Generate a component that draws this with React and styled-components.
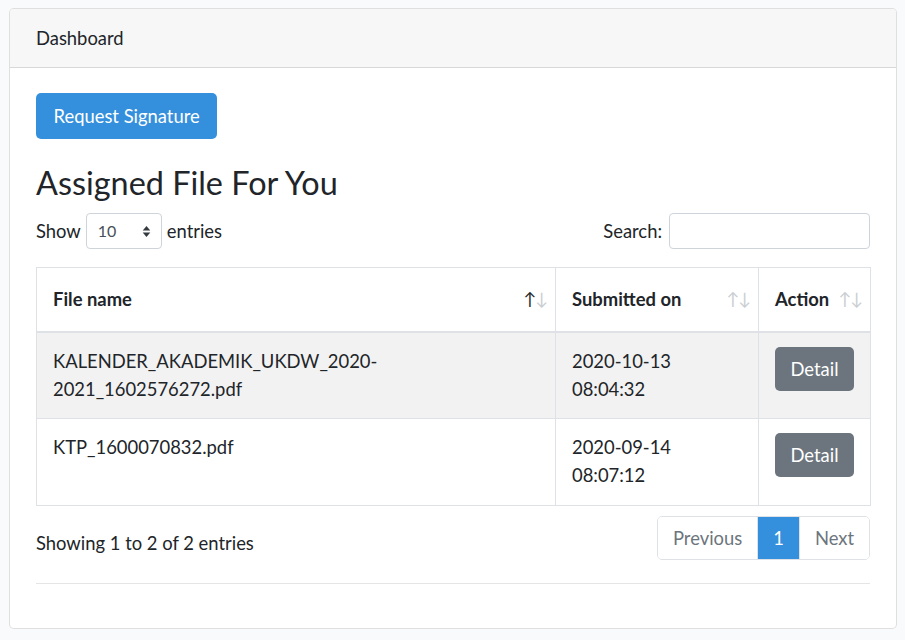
import styled, { createGlobalStyle } from "styled-components";

const GlobalStyle = createGlobalStyle`
  body {
    margin: 0;
    background: #f8fafc;
    font-family: "Lato", "Noto Sans", sans-serif;
    font-size: 18.4px;
    line-height: 28px;
    color: #212529;
  }
`;

const rows = [
  {
    name: "KALENDER_AKADEMIK_UKDW_2020-2021_1602576272.pdf",
    date: "2020-10-13",
    time: "08:04:32",
  },
  { name: "KTP_1600070832.pdf", date: "2020-09-14", time: "08:07:12" },
];

const App = () => {
  return (
    <>
      <GlobalStyle />
      <Page>
        <Card>
          <CardHeader>Dashboard</CardHeader>
          <CardBody>
            <PrimaryButton>Request Signature</PrimaryButton>
            <Title>Assigned File For You</Title>
            <Controls>
              <Label>
                Show
                <SelectBox>
                  <span>10</span>
                  <SelectArrows viewBox="0 0 8 12">
                    <path d="M4 1 L7.5 5 H0.5 Z" fill="#343a40" />
                    <path d="M4 11 L7.5 7 H0.5 Z" fill="#343a40" />
                  </SelectArrows>
                </SelectBox>
                entries
              </Label>
              <Label>
                Search:
                <SearchInput />
              </Label>
            </Controls>
            <Table>
              <colgroup>
                <col style={{ width: 519 }} />
                <col style={{ width: 203 }} />
                <col style={{ width: 112 }} />
              </colgroup>
              <thead>
                <tr>
                  <Th>
                    File name
                    <SortIcons>
                      <Arrow $active>↑</Arrow>
                      <Arrow>↓</Arrow>
                    </SortIcons>
                  </Th>
                  <Th>
                    Submitted on
                    <SortIcons>
                      <Arrow>↑</Arrow>
                      <Arrow>↓</Arrow>
                    </SortIcons>
                  </Th>
                  <Th>
                    Action
                    <SortIcons>
                      <Arrow>↑</Arrow>
                      <Arrow>↓</Arrow>
                    </SortIcons>
                  </Th>
                </tr>
              </thead>
              <tbody>
                {rows.map((row, i) => (
                  <Row key={row.name} $striped={i % 2 === 0}>
                    <Td>{row.name}</Td>
                    <Td>
                      {row.date}
                      <br />
                      {row.time}
                    </Td>
                    <Td>
                      <DetailButton>Detail</DetailButton>
                    </Td>
                  </Row>
                ))}
              </tbody>
            </Table>
            <Footer>
              <span>Showing 1 to 2 of 2 entries</span>
              <Pagination>
                <PageItem $disabled>Previous</PageItem>
                <PageItem $active>1</PageItem>
                <PageItem $disabled>Next</PageItem>
              </Pagination>
            </Footer>
            <Divider />
          </CardBody>
        </Card>
      </Page>
    </>
  );
};

const Page = styled.div`
  padding: 8px 8px 10px 9px;
`;

const Card = styled.div`
  background: #fff;
  border: 1px solid rgba(0, 0, 0, 0.125);
  border-radius: 5px;
  overflow: hidden;
`;

const CardHeader = styled.div`
  height: 58px;
  display: flex;
  align-items: center;
  padding: 0 26px;
  background: #f7f7f7;
  border-bottom: 1px solid rgba(0, 0, 0, 0.125);
`;

const CardBody = styled.div`
  padding: 25px 26px 44px;
`;

const PrimaryButton = styled.button`
  height: 46px;
  padding: 0 17.5px;
  border: none;
  border-radius: 5px;
  background: #3490dc;
  color: #fff;
  font-family: inherit;
  font-size: 18.4px;
`;

const Title = styled.h3`
  margin: 26px 0 12px;
  font-size: 32.4px;
  font-weight: 400;
  line-height: 36px;
`;

const Controls = styled.div`
  display: flex;
  justify-content: space-between;
  align-items: center;
  height: 36px;
  margin-bottom: 18px;
`;

const Label = styled.label`
  display: flex;
  align-items: center;
  gap: 5px;
`;

const SelectBox = styled.div`
  border: 1px solid #ced4da;
  border-radius: 4px;
  display: flex;
  align-items: center;
  justify-content: space-between;
  padding: 0 10px 0 11px;
  box-sizing: border-box;
  width: 76px;
  height: 36px;
  font-size: 16px;
  color: #495057;
`;

const SelectArrows = styled.svg`
  width: 9px;
  height: 13px;
`;

const SearchInput = styled.input`
  width: 201px;
  height: 36px;
  box-sizing: border-box;
  border: 1px solid #ced4da;
  border-radius: 4px;
  margin-left: 2px;
`;

const Table = styled.table`
  width: 100%;
  border-collapse: collapse;
  table-layout: fixed;
  border: 1px solid #dee2e6;
`;

const Th = styled.th`
  position: relative;
  height: 64px;
  padding: 0 16px;
  text-align: left;
  font-weight: 700;
  border: 1px solid #dee2e6;
  border-bottom: 2px solid #dee2e6;
  box-sizing: border-box;
`;

const SortIcons = styled.span`
  position: absolute;
  right: 8px;
  top: 50%;
  transform: translateY(-50%);
  display: flex;
  font-weight: 400;
  font-size: 17px;
  letter-spacing: -1px;
`;

const Arrow = styled.span`
  color: ${(p) => (p.$active ? "#212529" : "#c9cdd1")};
`;

const Row = styled.tr`
  background: ${(p) => (p.$striped ? "#f2f2f2" : "#fff")};
`;

const Td = styled.td`
  height: 87px;
  box-sizing: border-box;
  padding: 14px 16px;
  vertical-align: top;
  border: 1px solid #dee2e6;
`;

const DetailButton = styled.button`
  height: 44px;
  width: 79px;
  border: none;
  border-radius: 5px;
  background: #6c757d;
  color: #fff;
  font-family: inherit;
  font-size: 18.4px;
`;

const Footer = styled.div`
  display: flex;
  justify-content: space-between;
  align-items: center;
  margin-top: 10px;
  span {
    margin-top: 10px;
  }
`;

const Pagination = styled.div`
  display: flex;
  border: 1px solid #dee2e6;
  border-radius: 5px;
  overflow: hidden;
  height: 44px;
  box-sizing: border-box;
`;

const PageItem = styled.div`
  display: flex;
  align-items: center;
  padding: 0 15px;
  color: ${(p) => (p.$active ? "#fff" : "#6c757d")};
  background: ${(p) => (p.$active ? "#3490dc" : "#fff")};
  & + & {
    border-left: 1px solid #dee2e6;
  }
`;

const Divider = styled.hr`
  margin: 23px 0 0;
  border: none;
  border-top: 1px solid #e5e5e5;
`;

export default App;
